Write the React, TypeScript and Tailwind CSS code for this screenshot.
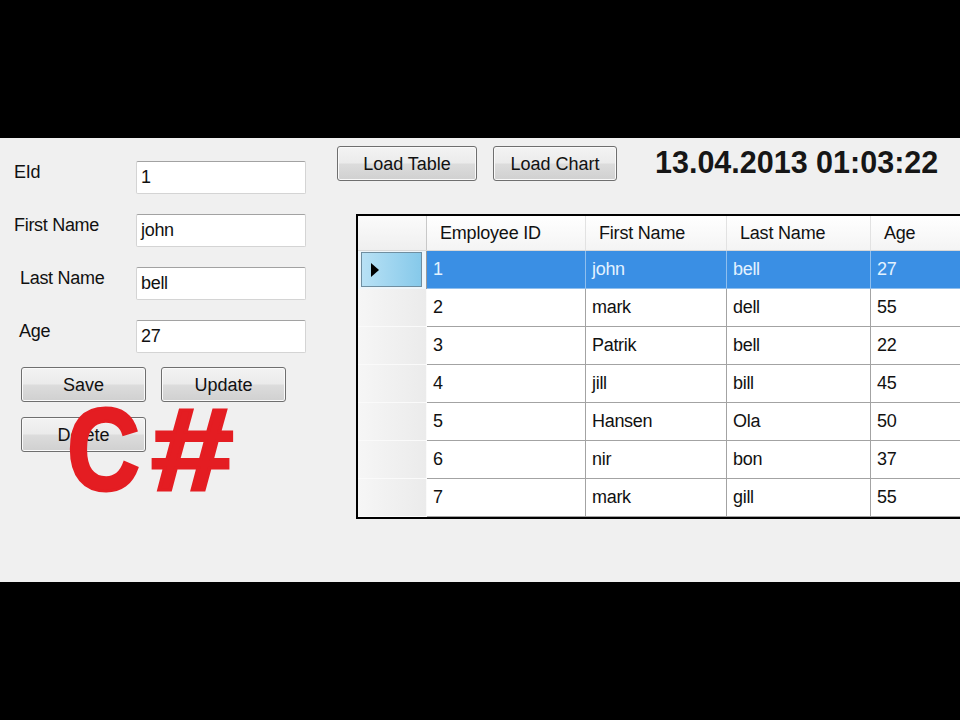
import React from 'react';

type Employee = { id: number; first: string; last: string; age: number };

const employees: Employee[] = [
  { id: 1, first: 'john', last: 'bell', age: 27 },
  { id: 2, first: 'mark', last: 'dell', age: 55 },
  { id: 3, first: 'Patrik', last: 'bell', age: 22 },
  { id: 4, first: 'jill', last: 'bill', age: 45 },
  { id: 5, first: 'Hansen', last: 'Ola', age: 50 },
  { id: 6, first: 'nir', last: 'bon', age: 37 },
  { id: 7, first: 'mark', last: 'gill', age: 55 },
];

const fields = [
  { label: 'EId', value: '1', indent: 'pl-0' },
  { label: 'First Name', value: 'john', indent: 'pl-0' },
  { label: 'Last Name', value: 'bell', indent: 'pl-[6px]' },
  { label: 'Age', value: '27', indent: 'pl-[5px]' },
];

const WinButton: React.FC<{ label: string; width: string }> = ({ label, width }) => (
  <button
    type="button"
    className={`${width} h-[35px] shrink-0 rounded-[3px] border border-[#6f6f6f] bg-[linear-gradient(to_bottom,#f3f3f3_0%,#ebebeb_48%,#dcdcdc_52%,#d0d0d0_100%)] shadow-[inset_0_0_0_1px_#fafafa] text-[18px] leading-none text-[#111]`}
  >
    {label}
  </button>
);

const headerCols = [
  { label: 'Employee ID', width: 'w-[159px]' },
  { label: 'First Name', width: 'w-[141px]' },
  { label: 'Last Name', width: 'w-[144px]' },
  { label: 'Age', width: 'w-[130px]' },
];

export default function App() {
  return (
    <div className="w-[960px] h-[720px] bg-black flex flex-col font-['Liberation_Sans',Arial,sans-serif] text-[#111]">
      <div className="h-[138px] shrink-0" />

      {/* form window */}
      <div className="relative h-[444px] shrink-0 bg-[#f0f0f0] flex overflow-hidden">
        {/* left: fields + buttons */}
        <div className="w-[337px] shrink-0 pt-[23px] pl-[14px]">
          <div className="flex flex-col gap-[20px]">
            {fields.map((f) => (
              <div key={f.label} className="flex items-start">
                <span className={`w-[122px] ${f.indent} text-[18px] leading-[22px] tracking-[-0.3px]`}>
                  {f.label}
                </span>
                <div className="w-[170px] h-[33px] flex items-center bg-white border border-[#d4d4d4] border-t-[#a2a2a2] rounded-[2px] pl-[4px] text-[18px] tracking-[-0.3px]">
                  {f.value}
                </div>
              </div>
            ))}
          </div>
          <div className="mt-[14px] ml-[7px] flex gap-[15px]">
            <WinButton label="Save" width="w-[125px]" />
            <WinButton label="Update" width="w-[125px]" />
          </div>
          <div className="mt-[15px] ml-[7px]">
            <WinButton label="Delete" width="w-[125px]" />
          </div>
        </div>

        {/* right: toolbar + grid */}
        <div className="flex-1 min-w-0 pt-[8px] flex flex-col">
          <div className="flex items-start">
            <WinButton label="Load Table" width="w-[140px]" />
            <div className="ml-[16px]">
              <WinButton label="Load Chart" width="w-[124px]" />
            </div>
            <span className="ml-[38px] -mt-[2px] text-[30.5px] leading-[36px] font-bold whitespace-nowrap text-[#161616]">
              13.04.2013 01:03:22
            </span>
          </div>

          <div className="mt-[33px] ml-[19px] w-[645px] shrink-0 border-2 border-black bg-white">
            {/* header */}
            <div className="flex h-[35px] border-b border-[#d8d8d8]">
              <div className="w-[69px] shrink-0 border-r border-[#c8c8c8] bg-[linear-gradient(to_bottom,#fbfbfb,#efefef)]" />
              {headerCols.map((c) => (
                <div
                  key={c.label}
                  className={`${c.width} shrink-0 flex items-center pl-[13px] border-r border-[#e2e2e2] bg-[linear-gradient(to_bottom,#ffffff,#f4f4f4)] text-[18px] tracking-[-0.2px]`}
                >
                  {c.label}
                </div>
              ))}
            </div>

            {/* rows */}
            {employees.map((e, i) => {
              const sel = i === 0;
              const cell = sel
                ? 'bg-[#3a8fe4] text-[#e2f2ff] border-r border-[#8fbfee] border-b border-[#3a8fe4]'
                : 'bg-white border-r border-b border-[#a3a3a3]';
              const values = [String(e.id), e.first, e.last, String(e.age)];
              return (
                <div key={e.id} className="flex h-[38px]">
                  <div
                    className={
                      sel
                        ? 'w-[69px] shrink-0 border-r border-[#9a9a9a] bg-[#eef6fb] p-[1px_4px_2px_3px]'
                        : 'w-[69px] shrink-0 border-r border-[#9a9a9a] border-b border-[#fafafa] bg-[linear-gradient(to_right,#f6f6f6,#ebebeb)]'
                    }
                  >
                    {sel && (
                      <div className="h-full flex items-center pl-[9px] border border-[#6f8ea0] bg-[linear-gradient(to_right,#b8e1f5,#86c9ea)]">
                        <svg width="8" height="14" viewBox="0 0 8 14">
                          <path d="M0 0 L8 7 L0 14 Z" fill="#000" />
                        </svg>
                      </div>
                    )}
                  </div>
                  {values.map((v, j) => (
                    <div
                      key={j}
                      className={`${headerCols[j].width} shrink-0 flex items-center pl-[6px] text-[18px] tracking-[-0.3px] ${cell}`}
                    >
                      {v}
                    </div>
                  ))}
                </div>
              );
            })}
          </div>
        </div>

        {/* C# logo over the form */}
        <div className="absolute left-[67px] top-[269px] flex items-start leading-[0.75] font-bold text-[#e41d22] text-[116px] [-webkit-text-stroke:3px_#e41d22] select-none">
          <span className="inline-block origin-left scale-x-[0.87]">C</span>
          <span className="inline-block origin-left scale-x-[1.28]">#</span>
        </div>
      </div>

      <div className="flex-1" />
    </div>
  );
}
